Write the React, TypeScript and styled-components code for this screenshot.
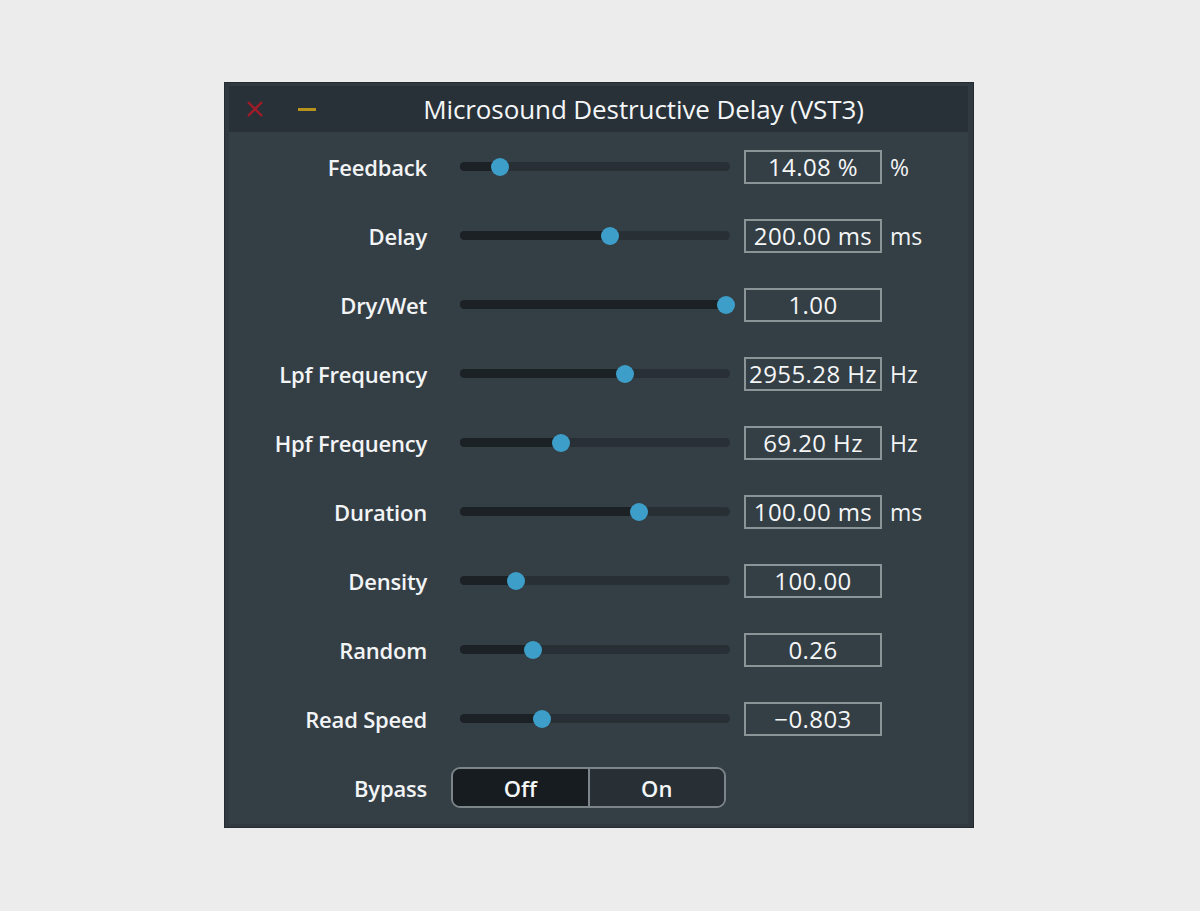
import styled, { createGlobalStyle } from "styled-components";

const GlobalStyle = createGlobalStyle`
  html, body {
    margin: 0;
    padding: 0;
    background: #ececec;
  }
  * {
    box-sizing: border-box;
  }
`;

const Page = styled.div`
  width: 1200px;
  height: 911px;
  padding: 82px 0 0 224px;
  font-family: "Open Sans", "DejaVu Sans", sans-serif;
`;

const Window = styled.div`
  width: 750px;
  height: 746px;
  background: #30393f;
  border: 1px solid #252c31;
  padding: 3px 5px 3px 4px;
  display: flex;
  flex-direction: column;
`;

const TitleBar = styled.div`
  height: 46px;
  flex: none;
  background: #283137;
  display: flex;
  align-items: center;
  position: relative;
`;

const CloseIcon = styled.svg`
  margin-left: 16px;
  width: 20px;
  height: 20px;
`;

const MinusIcon = styled.span`
  display: block;
  margin-left: 33px;
  width: 18px;
  height: 3px;
  background: #b8931c;
`;

const Title = styled.div`
  position: absolute;
  left: 0;
  right: 0;
  text-align: center;
  padding-left: 90px;
  color: #f4f6f7;
  font-size: 26px;
  font-weight: 500;
  letter-spacing: -0.1px;
`;

const Body = styled.div`
  flex: 1;
  background: #343e45;
  display: flex;
  flex-direction: column;
`;

const Row = styled.div`
  height: 69px;
  flex: none;
  display: grid;
  grid-template-columns: 198px 270px 137px auto;
  align-items: center;
`;

const Label = styled.div`
  text-align: right;
  color: #f2f4f5;
  font-size: 22px;
  font-weight: 600;
  letter-spacing: -0.2px;
`;

const SliderCell = styled.div`
  margin-left: 33px;
  width: 270px;
  position: relative;
  height: 20px;
  display: flex;
  align-items: center;
`;

const Track = styled.div`
  width: 100%;
  height: 9px;
  border-radius: 5px;
  background: #283035;
  overflow: hidden;
`;

const Fill = styled.div`
  height: 100%;
  background: #1b2125;
`;

const Thumb = styled.div`
  position: absolute;
  top: 1px;
  width: 18px;
  height: 18px;
  margin-left: -9px;
  border-radius: 50%;
  background: #3d9fc9;
`;

const ValueBox = styled.div`
  margin-left: 47px;
  width: 138px;
  height: 34px;
  border: 2px solid #8b9497;
  display: flex;
  align-items: center;
  justify-content: center;
  color: #f4f6f7;
  font-size: 24px;
  font-weight: 500;
  letter-spacing: 0.4px;
  white-space: nowrap;
`;

const Unit = styled.div`
  margin-left: 56px;
  color: #f2f4f5;
  font-size: 23px;
  font-weight: 500;
`;

const Segmented = styled.div`
  margin-left: 24px;
  width: 275px;
  height: 41px;
  border: 2px solid #7c8589;
  border-radius: 9px;
  overflow: hidden;
  display: flex;
`;

const Segment = styled.div<{ $active?: boolean }>`
  flex: 1;
  display: flex;
  align-items: center;
  justify-content: center;
  background: ${(p) => (p.$active ? "#161c20" : "#283035")};
  color: #f4f6f7;
  font-size: 22px;
  font-weight: 600;
  & + & {
    border-left: 2px solid #7c8589;
  }
`;

const params = [
  { label: "Feedback", pos: 40, value: "14.08 %", unit: "%" },
  { label: "Delay", pos: 150, value: "200.00 ms", unit: "ms" },
  { label: "Dry/Wet", pos: 266, value: "1.00", unit: "" },
  { label: "Lpf Frequency", pos: 165, value: "2955.28 Hz", unit: "Hz" },
  { label: "Hpf Frequency", pos: 101, value: "69.20 Hz", unit: "Hz" },
  { label: "Duration", pos: 179, value: "100.00 ms", unit: "ms" },
  { label: "Density", pos: 56, value: "100.00", unit: "" },
  { label: "Random", pos: 73, value: "0.26", unit: "" },
  { label: "Read Speed", pos: 82, value: "\u22120.803", unit: "" },
];

export default function App() {
  return (
    <>
      <GlobalStyle />
      <Page>
        <Window>
          <TitleBar>
            <CloseIcon viewBox="0 0 20 20">
              <path d="M3 3 L17 17 M17 3 L3 17" stroke="#a11b28" strokeWidth="2.4" />
            </CloseIcon>
            <MinusIcon />
            <Title>Microsound Destructive Delay (VST3)</Title>
          </TitleBar>
          <Body>
            {params.map((p) => (
              <Row key={p.label}>
                <Label>{p.label}</Label>
                <SliderCell>
                  <Track>
                    <Fill style={{ width: `${p.pos}px` }} />
                  </Track>
                  <Thumb style={{ left: `${p.pos}px` }} />
                </SliderCell>
                <ValueBox>{p.value}</ValueBox>
                <Unit>{p.unit}</Unit>
              </Row>
            ))}
            <Row>
              <Label>Bypass</Label>
              <Segmented>
                <Segment $active>Off</Segment>
                <Segment>On</Segment>
              </Segmented>
            </Row>
          </Body>
        </Window>
      </Page>
    </>
  );
}
